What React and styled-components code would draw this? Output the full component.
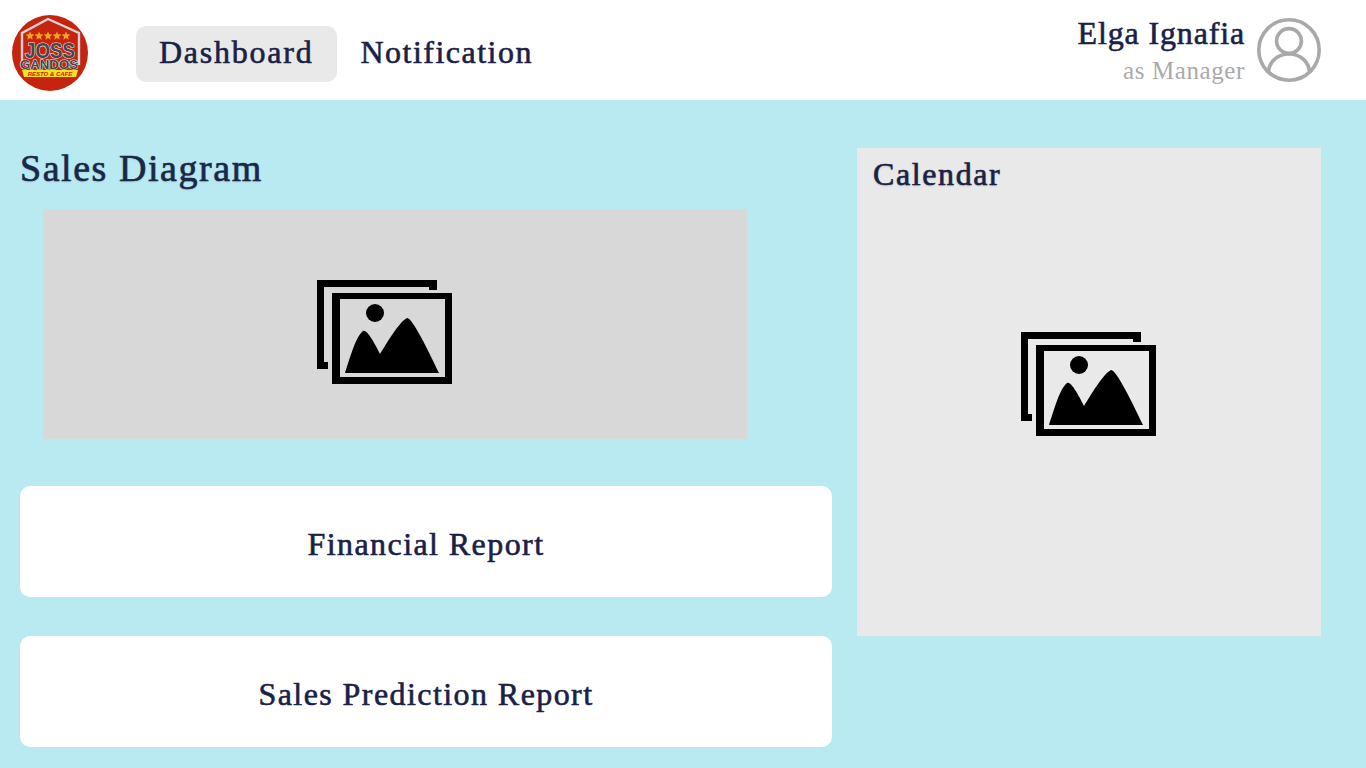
import React from "react";
import styled, { createGlobalStyle } from "styled-components";

const Global = createGlobalStyle`
  html, body { margin: 0; padding: 0; }
  body { font-family: "Liberation Serif", serif; background: #b9eaf2; }
`;
const Page = styled.div`
  width: 1366px; height: 768px; overflow: hidden; background: #b9eaf2; color: #1a2147;
  display: flex; flex-direction: column;
`;
const Header = styled.header`
  height: 100px; flex: none; background: #fff; display: flex; align-items: center; padding: 0 45px 0 12px;
`;
const LogoMark = styled.svg`flex: none; margin-top: 6px;`;
const Nav = styled.nav`display: flex; margin-left: 48px; margin-top: 8px;`;
const NavItem = styled.div`
  height: 56px; box-sizing: border-box; display: flex; align-items: center; padding: 0 ${p => p.$active ? "24px" : "23px"} 3px 23px; border-radius: 10px;
  font-size: 32px; letter-spacing: ${p => p.$active ? "1.75px" : "1.5px"}; -webkit-text-stroke: .6px #1a2147;
  background: ${p => p.$active ? "#e9e9e9" : "transparent"};
`;
const User = styled.div`margin-left: auto; display: flex; align-items: center; gap: 12px;`;
const UserText = styled.div`display: flex; flex-direction: column; align-items: flex-end;`;
const UserName = styled.div`font-size: 32px; letter-spacing: .85px; line-height: 36px; -webkit-text-stroke: .6px #1a2147;`;
const UserRole = styled.div`font-size: 25px; color: #aaa; letter-spacing: .6px; line-height: 34px; padding-top: 3px; margin-bottom: -3px;`;
const Main = styled.main`flex: 1; display: flex; padding: 48px 45px 0 20px; gap: 25px;`;
const Left = styled.section`width: 812px; display: flex; flex-direction: column;`;
const Title = styled.h1`
  margin: 0; font-size: 38px; line-height: 40px; font-weight: 400; letter-spacing: 1.55px; color: #1a2748;
  -webkit-text-stroke: .65px #1a2748; text-shadow: 0 1px 2px rgba(0,0,0,.15);
`;
const Diagram = styled.div`
  width: 704px; height: 230px; margin: 21px 0 47px 23px; background: #d8d8d8;
  display: flex; align-items: center; justify-content: center; padding: 16px 21px 0 0; box-sizing: border-box;
`;
const Report = styled.div`
  height: 111px; background: #fff; border-radius: 10px; display: flex; align-items: center; justify-content: center;
  font-size: 32px; letter-spacing: 1.43px; -webkit-text-stroke: .6px #1a2147; padding-top: 5px; box-sizing: border-box; margin-bottom: 39px;
`;
const Calendar = styled.aside`
  width: 464px; height: 488px; background: #e9e9e9; display: flex; flex-direction: column; padding: 8px 16px; box-sizing: border-box;
`;
const CalendarTitle = styled.h2`
  margin: 0; font-size: 32px; font-weight: 400; line-height: 36px; letter-spacing: 1.6px;
  -webkit-text-stroke: .6px #1a2147; text-shadow: 0 1px 2px rgba(0,0,0,.2);
`;
const CalendarBody = styled.div`flex: 1; display: flex; align-items: center; justify-content: center; padding-bottom: 52px;`;

const Pic = () => (
  <svg width="136" height="104" viewBox="0 0 136 104">
    <path d="M0 0H120V10H112V7H7V82H11V89H0Z" />
    <path fillRule="evenodd" d="M15 13H135V104H15ZM23 19V97H128V19Z" />
    <circle cx="58" cy="33" r="9" />
    <path d="M28 93C33 78 39 56 46 51C50 49 58 64 63 74C70 63 82 42 90 38C95 37 112 72 122 93Z" />
  </svg>
);
const star = (cx, cy, r) => {
  const pts = [];
  for (let i = 0; i < 10; i++) {
    const a = -Math.PI / 2 + (i * Math.PI) / 5;
    const q = i % 2 ? r * 0.45 : r;
    pts.push(`${(cx + q * Math.cos(a)).toFixed(2)},${(cy + q * Math.sin(a)).toFixed(2)}`);
  }
  return pts.join(" ");
};
const Logo = () => (
  <LogoMark width="76" height="76" viewBox="0 0 76 76">
    <circle cx="38" cy="38" r="38" fill="#c5240f" />
    <path d="M10 50V18L36 4 67 18V50" fill="none" stroke="#d9d4d2" strokeWidth="2.4" />
    {[18, 27, 36, 45, 54].map(x => <polygon key={x} points={star(x, 21, 4.6)} fill="#f4a61f" />)}
    <g fontFamily="Liberation Sans, sans-serif" fontWeight="700" textAnchor="middle">
      <text x="38" y="43" fontSize="22" textLength="50" lengthAdjust="spacingAndGlyphs" fill="#45474d" stroke="#eee" strokeWidth="1.2" paintOrder="stroke">JOSS</text>
      <text x="37" y="54" fontSize="12.5" textLength="58" lengthAdjust="spacingAndGlyphs" fill="#45474d" stroke="#eee" strokeWidth="1" paintOrder="stroke">GANDOS</text>
    </g>
    <path d="M10 55H66L64 62H12Z" fill="#f8e11a" />
    <text x="38" y="60.5" textAnchor="middle" fontSize="6" fontWeight="700" fontStyle="italic" fill="#c5240f" fontFamily="Liberation Sans, sans-serif">RESTO &amp; CAFE</text>
  </LogoMark>
);
const Avatar = () => (
  <svg width="64" height="64" viewBox="0 0 64 64" fill="none" stroke="#a9a9a9" strokeWidth="3.6">
    <circle cx="32" cy="32" r="30.2" />
    <circle cx="32" cy="23" r="12.4" />
    <path d="M11.500 55c0-11 9-19 20.500-19S52.500 44 52.500 55" />
  </svg>
);

export default function App() {
  return (
    <Page>
      <Global />
      <Header>
        <Logo />
        <Nav>
          <NavItem $active>Dashboard</NavItem>
          <NavItem>Notification</NavItem>
        </Nav>
        <User>
          <UserText>
            <UserName>Elga Ignafia</UserName>
            <UserRole>as Manager</UserRole>
          </UserText>
          <Avatar />
        </User>
      </Header>
      <Main>
        <Left>
          <Title>Sales Diagram</Title>
          <Diagram><Pic /></Diagram>
          <Report>Financial Report</Report>
          <Report>Sales Prediction Report</Report>
        </Left>
        <Calendar>
          <CalendarTitle>Calendar</CalendarTitle>
          <CalendarBody><Pic /></CalendarBody>
        </Calendar>
      </Main>
    </Page>
  );
}
